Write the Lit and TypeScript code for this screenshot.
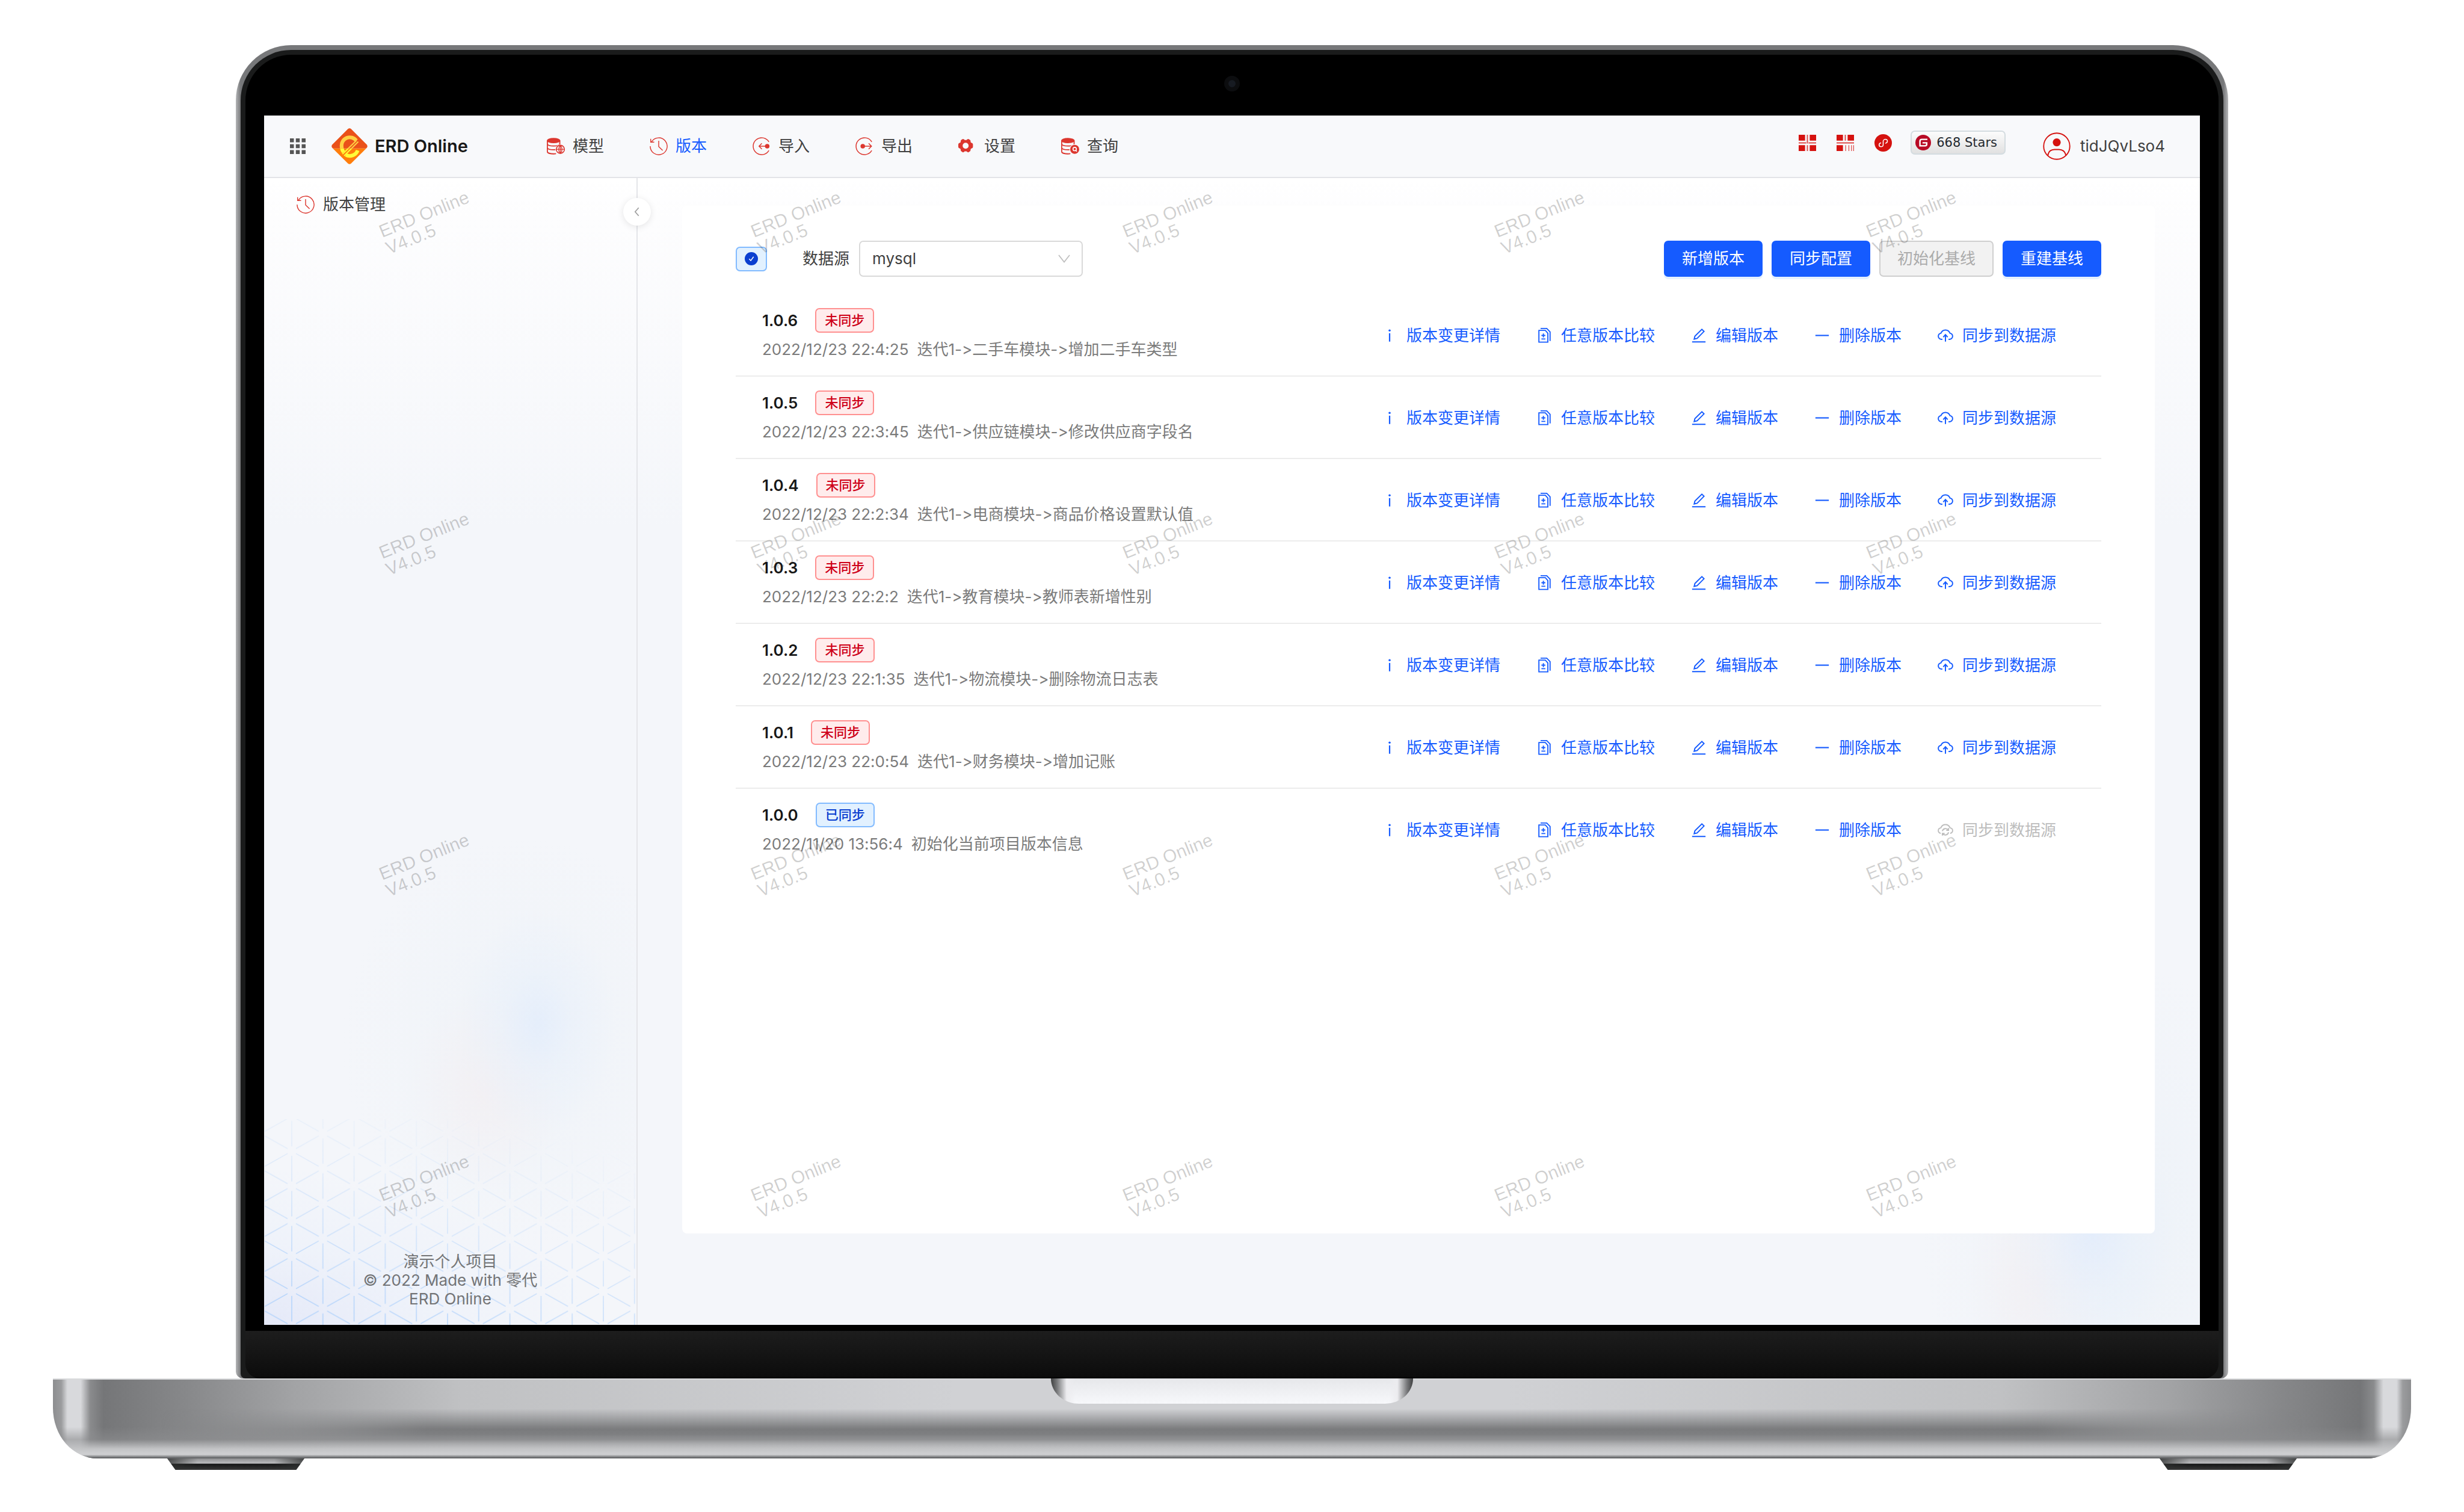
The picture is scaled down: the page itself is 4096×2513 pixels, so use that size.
import { LitElement, html, css, svg } from "lit";
import { customElement, state } from "lit/decorators.js";

type IconName =
  | "grid" | "model" | "history" | "import" | "export" | "gear" | "query"
  | "qr" | "barcode" | "mini" | "gitee" | "user" | "check" | "down" | "left"
  | "info" | "diff" | "edit" | "minus" | "cloudUp" | "cloudSync" | "logo";

const database = svg`
  <ellipse cx="12" cy="6" rx="12" ry="4.6" fill="currentColor"/>
  <path d="M1 6V25.5C1 28 6 29.6 12 29.6c1.6 0 3-.1 4.3-.3M1 12.4c1 2 5.5 3.3 11 3.3s10-1.3 11-3.3V6M1 19c1 2 5 3.3 10.5 3.3 1.5 0 2.8-.1 4-.3" fill="none" stroke="currentColor" stroke-width="1.9"/>`;

const ICONS: Record<IconName, { box: string; body: unknown }> = {
  grid: {
    box: "0 0 28 28",
    body: [0, 1, 2].map((r) => [0, 1, 2].map((c) => svg`<rect x=${c * 10.5} y=${r * 10.5} width="7" height="7" fill="currentColor"/>`)),
  },
  logo: {
    box: "0 0 64 64",
    body: svg`
      <defs>
        <clipPath id="top-half"><rect width="64" height="36"/></clipPath>
        <clipPath id="bottom-half"><rect y="36" width="64" height="28"/></clipPath>
        <g id="diamond"><path d="M29 1.5q3-2.500 6 0L62.5 29q2.500 3 0 6L35 62.5q-3 2.500-6 0L1.500 35q-2.500-3 0-6z"/></g>
        <g id="letter" fill="none">
          <path d="M44 22A14.500 14.500 0 0 0 18 32q0 6 3.500 10.500" stroke-width="6.500"/>
          <path d="M25.500 47.500A15 15 0 0 0 46.500 39.500" stroke-width="6.500"/>
          <path d="M19.500 46L44.500 21.500" stroke-width="2.200"/>
          <path d="M22.500 49L47.500 24" stroke-width="2.200"/>
        </g>
      </defs>
      <g clip-path="url(#top-half)"><use href="#diamond" fill="#ea5119"/><use href="#letter" stroke="#ffd043"/></g>
      <g clip-path="url(#bottom-half)"><use href="#diamond" fill="#ff7d0b"/><use href="#letter" stroke="#fffb38"/></g>`,
  },
  model: {
    box: "0 0 32 32",
    body: svg`${database}
      <circle cx="24" cy="21.5" r="8.6" fill="#f8f9fb"/>
      <circle cx="24" cy="21.5" r="7.2" fill="none" stroke="currentColor" stroke-width="1.7"/>
      <path d="M17 21.5h14M24 14.3v14.4M24 14.3c-4 4-4 10.4 0 14.4M24 14.3c4 4 4 10.4 0 14.4" fill="none" stroke="currentColor" stroke-width="1.5"/>`,
  },
  query: {
    box: "0 0 32 32",
    body: svg`${database}
      <circle cx="24" cy="21.5" r="9.2" fill="#f8f9fb"/>
      <circle cx="24" cy="21.5" r="8" fill="currentColor"/>
      <circle cx="24" cy="21" r="3" fill="none" stroke="#fff" stroke-width="1.7"/>
      <path d="M26 23.5l1.8 2" stroke="#fff" stroke-width="1.7"/>`,
  },
  history: {
    box: "0 0 32 32",
    body: svg`<path d="M1 16A15 15 0 1 0 3.4 8M1.8 3v5.8H8M16 6.5v10.2l7 6.8" fill="none" stroke="currentColor" stroke-width="1.5"/>`,
  },
  import: {
    box: "0 0 32 32",
    body: svg`<path d="M29 8.3a15 15 0 1 0 0 15.4M25 16H12M16.5 11L11.5 16l5 5" fill="none" stroke="currentColor" stroke-width="1.6"/>
      <circle cx="26" cy="16" r="4" fill="currentColor"/>`,
  },
  export: {
    box: "0 0 32 32",
    body: svg`<path d="M29 8.3a15 15 0 1 0 0 15.4M13 16h15M23.5 11l5 5-5 5" fill="none" stroke="currentColor" stroke-width="1.6"/>
      <circle cx="13" cy="16" r="4" fill="currentColor"/>`,
  },
  gear: {
    box: "0 0 32 32",
    body: svg`<path fill-rule="evenodd" fill="currentColor" d="M7 3.8q1.5-1.2 3 0l1.5 1.2h3L16 3.8q1.5-1.2 3 0l2 1.300q1 1 .7 2.400l.6 2 2.200 1q1.500.9 1.500 2.500v4q0 1.700-1.500 2.500l-2.200 1-.6 2q.3 1.500-.7 2.400l-2 1.300q-1.500 1.200-3 0L14.500 25h-3L10 26.200q-1.500 1.200-3 0l-2-1.300q-1-1-.7-2.400l-.6-2-2.200-1Q0 18.700 0 17v-4q0-1.700 1.500-2.500l2.200-1 .6-2Q4 6 5 5.100zM13 9.800a5.300 5.300 0 1 0 0 10.600 5.300 5.300 0 0 0 0-10.600z"/>`,
  },
  qr: {
    box: "0 0 30 30",
    body: svg`<g fill="currentColor"><path d="M0 1h11v10H0zM19 1h11v10H19zM0 19h11v10H0zM19 19h11v10H19z"/>
      <path opacity=".75" d="M14 1h2v15h-2zM0 14h13v2H0zM17 14h13v2H17zM14 19h2v10h-2z"/></g>`,
  },
  barcode: {
    box: "0 0 30 30",
    body: svg`<g fill="currentColor"><path d="M0 1h11v10H0zM19 1h11v10H19zM0 19h11v10H0z"/>
      <path opacity=".75" d="M14 1h2v10h-2zM0 14h30v2H0zM15 19h1.3v10H15zM20.500 19h1.300v10h-1.300zM25 19h1.300v10H25zM28.700 19h1.300v10h-1.300z"/></g>`,
  },
  mini: {
    box: "0 0 32 32",
    body: svg`<circle cx="16" cy="16" r="16" fill="currentColor"/>
      <path d="M20.5 16.500c2-.5 3.200-1.800 3.200-3.500 0-2-1.600-3.600-3.700-3.600S16 11 16 13v6c0 2.200-1.700 4-4 4-2 0-3.500-1.500-3.500-3.400 0-1.700 1.200-3 3-3.500" fill="none" stroke="#fff" stroke-width="1.700" stroke-linecap="round"/>`,
  },
  gitee: {
    box: "0 0 28 28",
    body: svg`<circle cx="14" cy="14" r="14" fill="#b80a25"/>
      <path d="M21.5 8.200H11.500Q8.200 8.200 8.200 11.500v8.300h9.300q2.800 0 2.800-2.800v-2.600h-7.500" fill="none" stroke="#fff" stroke-width="2.600"/>`,
  },
  user: {
    box: "0 0 50 50",
    body: svg`<circle cx="25" cy="25" r="23.6" fill="none" stroke="currentColor" stroke-width="2"/>
      <circle cx="25" cy="18" r="7.2" fill="currentColor"/>
      <path d="M9 42Q10 31.5 21 31h8q11 .5 12.500 11" fill="none" stroke="currentColor" stroke-width="2.200"/>`,
  },
  check: {
    box: "0 0 24 24",
    body: svg`<circle cx="12" cy="12" r="12" fill="#0b3fd0"/><path d="M8 12.2l3 3.300 5-7" fill="none" stroke="#fff" stroke-width="1.600"/>`,
  },
  down: { box: "0 0 20 20", body: svg`<path d="M1 4l9 11.500L19 4" fill="none" stroke="currentColor" stroke-width="1.800"/>` },
  left: { box: "0 0 20 20", body: svg`<path d="M13 2.5L6.500 10l6.500 7.500" fill="none" stroke="currentColor" stroke-width="2"/>` },
  info: { box: "0 0 28 28", body: svg`<circle cx="14" cy="4.5" r="1.900" fill="currentColor"/><path d="M14 9.500V24.500" stroke="currentColor" stroke-width="2.400"/>` },
  diff: {
    box: "0 0 28 28",
    body: svg`<path d="M4.5 4.500H16L20.500 9.500V25.500H4.500zM7.500 1h11L24.500 7.200V23.500M9 13.500h7M12.500 10v7M9 19.800h7" fill="none" stroke="currentColor" stroke-width="2"/>`,
  },
  edit: {
    box: "0 0 28 28",
    body: svg`<path d="M19.5 2.500l3.800 3.800L11 18.700l-5.300 1.300L7 14.800zM2 25h24" fill="none" stroke="currentColor" stroke-width="2.100"/>`,
  },
  minus: { box: "0 0 28 28", body: svg`<path d="M2 13.5h24" stroke="currentColor" stroke-width="2.300"/>` },
  cloudUp: {
    box: "0 0 28 28",
    body: svg`<path d="M8.5 20.500H7.200C3.800 20.500 1.200 18 1.200 15c0-2.800 2-4.800 4.600-5.400C7.200 6 10.300 3.800 14 3.800S20.800 6 22.200 9.600c2.600.6 4.600 2.600 4.600 5.400 0 3-2.600 5.500-6 5.500h-1.300M14 24.500V13M10 16.500l4-4.500 4 4.500" fill="none" stroke="currentColor" stroke-width="2.100"/>`,
  },
  cloudSync: {
    box: "0 0 28 28",
    body: svg`<path d="M5.5 19.500C3 18.900 1.200 17 1.200 14.600c0-2.500 2-4.500 4.600-5C7.200 6 10.300 3.800 14 3.800S20.800 6 22.200 9.600c2.600.5 4.600 2.500 4.600 5 0 2.400-1.800 4.300-4.300 4.900M8.500 15.500a5.800 5.800 0 0 1 10.500-2M19.500 17.500a5.800 5.800 0 0 1-10.500 2.300M19.500 10v4h-4M8.500 23.500v-4h4" fill="none" stroke="currentColor" stroke-width="2"/>`,
  },
};

const icon = (name: IconName) => html`
  <svg class="icon" viewBox=${ICONS[name].box} aria-hidden="true">${ICONS[name].body}</svg>`;

const NAV: { icon: IconName; label: string }[] = [
  { icon: "model", label: "模型" },
  { icon: "history", label: "版本" },
  { icon: "import", label: "导入" },
  { icon: "export", label: "导出" },
  { icon: "gear", label: "设置" },
  { icon: "query", label: "查询" },
];

const VERSIONS = [
  { name: "1.0.6", synced: false, time: "2022/12/23 22:4:25", text: "迭代1->二手车模块->增加二手车类型" },
  { name: "1.0.5", synced: false, time: "2022/12/23 22:3:45", text: "迭代1->供应链模块->修改供应商字段名" },
  { name: "1.0.4", synced: false, time: "2022/12/23 22:2:34", text: "迭代1->电商模块->商品价格设置默认值" },
  { name: "1.0.3", synced: false, time: "2022/12/23 22:2:2", text: "迭代1->教育模块->教师表新增性别" },
  { name: "1.0.2", synced: false, time: "2022/12/23 22:1:35", text: "迭代1->物流模块->删除物流日志表" },
  { name: "1.0.1", synced: false, time: "2022/12/23 22:0:54", text: "迭代1->财务模块->增加记账" },
  { name: "1.0.0", synced: true, time: "2022/11/20 13:56:4", text: "初始化当前项目版本信息" },
];

@customElement("app-root")
export class AppRoot extends LitElement {
  @state() private current = "版本";

  static styles = css`
    :host {
      display: flex;
      flex-direction: column;
      box-sizing: border-box;
      min-height: 100vh;
      padding: 75px 88px 70px;
      background: #fff;
      font-family: Inter, "Noto Sans CJK SC", sans-serif;
      font-size: 26px;
      line-height: 40px;
      color: #404040;
      font-variant-ligatures: none;
      font-feature-settings: "calt" 0;
    }
    *, *::before, *::after { box-sizing: border-box; }
    button, select { font: inherit; color: inherit; cursor: pointer; }
    a { color: inherit; text-decoration: none; }
    .icon { display: block; flex: none; width: 26px; height: 26px; overflow: visible; }

    /* laptop lid */
    .lid {
      flex: 1;
      display: flex;
      flex-direction: column;
      margin: 0 304px;
      padding: 8px 8px 0;
      border-radius: 92px 92px 12px 12px;
      background: linear-gradient(90deg, #b4b5b7 0, #77787a 8px, #77787a calc(100% - 8px), #b4b5b7 100%);
    }
    .rim {
      flex: 1;
      display: flex;
      flex-direction: column;
      padding: 8px 8px 0;
      border-radius: 84px 84px 8px 8px;
      background: #1a1b1b;
    }
    .bezel {
      flex: 1;
      display: flex;
      flex-direction: column;
      padding: 0 31px 10px;
      border-radius: 76px 76px 0 0;
      background: #000;
    }
    .camera-bar { display: flex; justify-content: center; align-items: center; height: 101px; padding-bottom: 6px; }
    .camera { width: 26px; height: 26px; border-radius: 50%; border: 7px solid #0c0d0f; background: #171b22; }
    .chin { height: 79px; border-radius: 0 0 24px 24px; background: linear-gradient(#1d1d1d, #0c0c0c 96%, #000); }

    /* laptop base */
    .base {
      position: relative;
      display: flex;
      justify-content: center;
      height: 133px;
      border-radius: 0 0 74px 74px / 0 0 84px 84px;
      overflow: hidden;
      background: linear-gradient(90deg, #8d8e90 0, #9b9c9e 14px, #d8d9dc 24px, #d8d9dc 46px, #8a8b8d 62px, #757678 84px, #87888a 220px, #a2a3a5 400px, #c0c1c3 680px, #d0d1d4 1500px,
        #d0d1d4 calc(100% - 1500px), #c0c1c3 calc(100% - 680px), #a2a3a5 calc(100% - 400px), #87888a calc(100% - 220px), #757678 calc(100% - 84px), #8a8b8d calc(100% - 62px), #d8d9dc calc(100% - 46px), #d8d9dc calc(100% - 24px), #9b9c9e calc(100% - 14px), #8d8e90 100%);
    }
    .base::before {
      content: "";
      position: absolute;
      inset: 0;
      background: linear-gradient(transparent 38%, #77787a 64%, #77787a 70%, transparent 90%);
      -webkit-mask-image: linear-gradient(90deg, transparent 180px, #000 620px, #000 calc(100% - 620px), transparent calc(100% - 180px));
      mask-image: linear-gradient(90deg, transparent 180px, #000 620px, #000 calc(100% - 620px), transparent calc(100% - 180px));
    }
    .base::after {
      content: "";
      position: absolute;
      inset: 0;
      border-top: 2px solid #d9dadc;
      background: linear-gradient(transparent 60%, #8c8d8f99 76%, #c3c4c6 88%, #cfd0d2 95%, #66686a 99%);
    }
    .notch {
      position: relative;
      z-index: 1;
      width: 602px;
      height: 42px;
      border-radius: 0 0 46px 46px / 0 0 42px 42px;
      background: linear-gradient(90deg, #3f4041 0, #77787a 10px, #ececef 26px, transparent 40px, transparent calc(100% - 40px), #ececef calc(100% - 26px), #77787a calc(100% - 10px), #3f4041 100%),
        linear-gradient(#e6e7ea, #f7f8fb);
    }
    .feet { display: flex; justify-content: space-between; padding: 0 190px; }
    .foot {
      width: 228px;
      height: 19px;
      clip-path: polygon(0 0, 100% 0, 94% 100%, 6% 100%);
      background: linear-gradient(90deg, #303232cc, transparent 22%, transparent 78%, #303232cc), linear-gradient(#8e8f91 0, #bbbcbe 42%, #161717 50%, #383838 100%);
    }

    /* application screen */
    .screen {
      flex: 1;
      display: flex;
      flex-direction: column;
      min-width: 0;
      overflow: hidden;
      background: linear-gradient(#fff 104px, #fdfdfe 170px, #f4f6fa 34%, #f4f6fa);
    }
    header {
      display: flex;
      align-items: center;
      height: 104px;
      padding: 0 58px 0 43px;
      border-bottom: 2px solid #e3e4e8;
      background: #f8f9fb;
    }
    .apps { display: flex; margin-right: 43px; padding: 0; border: 0; background: none; color: #555; }
    .brand { display: flex; align-items: center; gap: 12px; width: 358px; font-size: 29px; font-weight: 600; color: #181818; white-space: nowrap; }
    .brand .icon { width: 60px; height: 60px; }
    nav { display: flex; gap: 76px; }
    .nav-item { display: flex; align-items: center; gap: 13px; white-space: nowrap; }
    .nav-item .icon { width: 30px; height: 30px; color: #dc362e; }
    .nav-item.active { color: #155bff; }
    .tools { display: flex; align-items: center; gap: 34px; margin-left: auto; padding-bottom: 12px; color: #d5120f; }
    .tools .icon { width: 29px; height: 29px; }
    .stars {
      display: flex;
      align-items: center;
      gap: 9px;
      height: 40px;
      margin-left: -3px;
      padding: 0 12px 0 6px;
      border: 2px solid #d4dce0;
      border-radius: 7px;
      background: linear-gradient(#fcfcfc, #e1e1e1);
      color: #24292f;
      font-family: "DejaVu Sans", sans-serif;
      font-size: 21px;
      line-height: 28px;
      white-space: nowrap;
    }
    .stars .icon { width: 26px; height: 26px; }
    .account { display: flex; align-items: center; gap: 16px; margin-left: 62px; }
    .account .icon { width: 46px; height: 46px; color: #d5120f; }

    .body { position: relative; flex: 1; display: flex; min-height: 0; }
    .sidebar {
      position: relative;
      display: flex;
      flex-direction: column;
      justify-content: space-between;
      width: 621px;
      border-right: 2px solid #e4e5e9;
      background:
        radial-gradient(130px 190px at 455px calc(100% - 500px), #e5eefb, #e8f0fb80 45%, #e8f0fb00),
        radial-gradient(130px 170px at 370px calc(100% - 390px), #f3eff2cc, #f3eff200),
        radial-gradient(300px 340px at 430px calc(100% - 470px), #eff3f8, #eff3f800),
        radial-gradient(540px 260px at 0 100%, #e5e9f8, #ebf0fa99 50%, #ebf0fa00);
    }
    .lattice {
      position: absolute;
      left: 0;
      bottom: 0;
      width: 100%;
      height: 342px;
      -webkit-mask-image: linear-gradient(14deg, #000 12%, #0006 50%, #0000 88%);
      mask-image: linear-gradient(14deg, #000 12%, #0006 50%, #0000 88%);
    }
    .side-item { display: flex; align-items: center; gap: 14px; padding: 24px 54px; }
    .side-item .icon { width: 30px; height: 30px; color: #dc362e; }
    .credits { position: relative; padding-bottom: 28px; text-align: center; line-height: 31px; color: #737476; }
    .credits p { margin: 0; }
    .collapse {
      position: absolute;
      top: 33px;
      right: -24px;
      z-index: 2;
      display: flex;
      align-items: center;
      justify-content: center;
      width: 46px;
      height: 46px;
      padding: 0;
      border: 0;
      border-radius: 50%;
      background: #fff;
      box-shadow: 0 2px 12px #0000001a;
      color: #a0a0a0;
    }
    .collapse .icon { width: 18px; height: 18px; }

    main {
      flex: 1;
      display: flex;
      min-width: 0;
      padding: 46px 75px 152px 74px;
      background:
        radial-gradient(140px 200px at calc(100% - 180px) calc(100% - 150px), #e4edfb, #e8f0fb80 50%, #e8f0fb00),
        radial-gradient(120px 180px at calc(100% - 270px) calc(100% - 70px), #f3eff2cc, #f3eff200),
        radial-gradient(320px 460px at calc(100% - 140px) calc(100% - 140px), #edf2f8, #edf2f800);
    }
    .card { flex: 1; min-width: 0; padding: 58px 89px; border-radius: 8px; background: #fff; }
    .toolbar { display: flex; align-items: center; height: 60px; margin-bottom: 29px; }
    .status { display: flex; align-items: center; justify-content: center; width: 52px; height: 41px; border: 2px solid #82bbff; border-radius: 7px; background: #e2f1ff; }
    .status .icon { width: 22px; height: 22px; }
    .toolbar label { margin: 0 16px 0 59px; }
    .picker { display: grid; align-items: center; width: 372px; }
    .picker > * { grid-area: 1 / 1; }
    .picker select { width: 100%; height: 60px; padding: 0 20px; border: 2px solid #d9d9d9; border-radius: 7px; background: #fff; appearance: none; }
    .picker .icon { justify-self: end; width: 20px; height: 20px; margin-right: 21px; color: #bfbfbf; pointer-events: none; }
    .buttons { display: flex; gap: 15px; margin-left: auto; }
    .button { height: 60px; padding: 0 28px; border: 2px solid #155bff; border-radius: 7px; background: #155bff; box-shadow: 0 4px 0 #e5f1ff; color: #fff; line-height: 40px; white-space: nowrap; }
    .button:disabled { border-color: #cfcfcf; background: #f2f2f2; box-shadow: none; color: #ababab; cursor: default; }

    .versions { margin: 0; padding: 0; list-style: none; }
    .version { display: flex; align-items: center; justify-content: space-between; padding: 23px 75px 21px 44px; border-bottom: 2px solid #ececec; white-space: nowrap; }
    .version:last-child { border-bottom: 0; }
    .title { display: flex; align-items: center; gap: 29px; height: 41px; margin-bottom: 6px; font-weight: 600; color: #181818; }
    .tag { height: 41px; padding: 0 14px; border: 2px solid #ff9090; border-radius: 7px; background: #ffecec; color: #ce0018; font-size: 22px; line-height: 37px; font-weight: 500; }
    .tag.synced { border-color: #82bbff; background: #e2f1ff; color: #0b3fd0; }
    .detail { display: flex; gap: 14px; line-height: 44px; color: #7b7b7b; }
    .actions { display: flex; gap: 60px; }
    .action { display: flex; align-items: center; gap: 15px; padding: 0; border: 0; background: none; color: #155bff; }
    .action:disabled { color: #bdbdbd; cursor: default; }

    /* watermark laid over the whole workspace */
    .watermark {
      position: absolute;
      inset: 0;
      z-index: 3;
      display: grid;
      grid-template-columns: repeat(5, 618px);
      grid-auto-rows: 534px;
      overflow: hidden;
      pointer-events: none;
      font-family: "Liberation Sans", sans-serif;
      font-size: 30px;
      line-height: 30px;
      color: #00000030;
    }
    .mark { padding: 76px 0 0 187px; }
    .mark p { width: max-content; margin: 0; transform: rotate(-22deg); transform-origin: 0 0; }
  `;

  private renderHeader() {
    return html`
      <header>
        <button class="apps" aria-label="应用">${icon("grid")}</button>
        <a class="brand" href="#home">${icon("logo")}<span>ERD Online</span></a>
        <nav>
          ${NAV.map((n) => html`
            <a class="nav-item ${n.label === this.current ? "active" : ""}" href="#${n.icon}"
              @click=${() => (this.current = n.label)}>${icon(n.icon)}<span>${n.label}</span></a>`)}
        </nav>
        <div class="tools">
          <a href="#group" aria-label="交流群">${icon("qr")}</a>
          <a href="#public" aria-label="公众号">${icon("barcode")}</a>
          <a href="#mini" aria-label="小程序">${icon("mini")}</a>
          <a class="stars" href="#stars">${icon("gitee")}<span>668 Stars</span></a>
        </div>
        <a class="account" href="#account">${icon("user")}<span>tidJQvLso4</span></a>
      </header>`;
  }

  private renderLattice() {
    return html`
      <svg class="lattice" aria-hidden="true">
        <defs>
          <pattern id="triangles" width="103.6" height="58.2" patternUnits="userSpaceOnUse" x="46" y="286">
            <g stroke="#b3d3fb" stroke-width="1.5">
              <path d="M0 8V50.2M103.6 8V50.2M51.8 -21V21M51.8 37V79"/>
              <path d="M7 4l37.8 21.2M58.8 25.2L96.6 4M7 54.2l37.8-21.2M58.8 33l37.8 21.2"/>
            </g>
          </pattern>
        </defs>
        <rect width="100%" height="100%" fill="url(#triangles)"/>
      </svg>`;
  }

  private renderSidebar() {
    return html`
      <aside class="sidebar">
        ${this.renderLattice()}
        <a class="side-item" href="#versions">${icon("history")}<span>版本管理</span></a>
        <div class="credits">
          <p>演示个人项目</p>
          <p>© 2022 Made with 零代</p>
          <p>ERD Online</p>
        </div>
        <button class="collapse" aria-label="收起">${icon("left")}</button>
      </aside>`;
  }

  private renderVersion(v: (typeof VERSIONS)[number]) {
    return html`
      <li class="version">
        <div>
          <div class="title"><span>${v.name}</span><span class="tag ${v.synced ? "synced" : ""}">${v.synced ? "已同步" : "未同步"}</span></div>
          <div class="detail"><span>${v.time}</span><span>${v.text}</span></div>
        </div>
        <div class="actions">
          <button class="action">${icon("info")}<span>版本变更详情</span></button>
          <button class="action">${icon("diff")}<span>任意版本比较</span></button>
          <button class="action">${icon("edit")}<span>编辑版本</span></button>
          <button class="action">${icon("minus")}<span>删除版本</span></button>
          <button class="action" ?disabled=${v.synced}>${icon(v.synced ? "cloudSync" : "cloudUp")}<span>同步到数据源</span></button>
        </div>
      </li>`;
  }

  private renderMain() {
    return html`
      <main>
        <section class="card">
          <div class="toolbar">
            <span class="status">${icon("check")}</span>
            <label for="source">数据源</label>
            <div class="picker">
              <select id="source"><option>mysql</option></select>
              ${icon("down")}
            </div>
            <div class="buttons">
              <button class="button">新增版本</button>
              <button class="button">同步配置</button>
              <button class="button" disabled>初始化基线</button>
              <button class="button">重建基线</button>
            </div>
          </div>
          <ul class="versions">${VERSIONS.map((v) => this.renderVersion(v))}</ul>
        </section>
      </main>`;
  }

  render() {
    return html`
      <div class="lid">
        <div class="rim">
          <div class="bezel">
            <div class="camera-bar"><span class="camera"></span></div>
            <div class="screen">
              ${this.renderHeader()}
              <div class="body">
                ${this.renderSidebar()}
                ${this.renderMain()}
                <div class="watermark" aria-hidden="true">
                  ${Array.from({ length: 20 }, () => html`<div class="mark"><p>ERD Online<br />V4.0.5</p></div>`)}
                </div>
              </div>
            </div>
          </div>
          <div class="chin"></div>
        </div>
      </div>
      <div class="base"><span class="notch"></span></div>
      <div class="feet"><span class="foot"></span><span class="foot"></span></div>`;
  }
}
